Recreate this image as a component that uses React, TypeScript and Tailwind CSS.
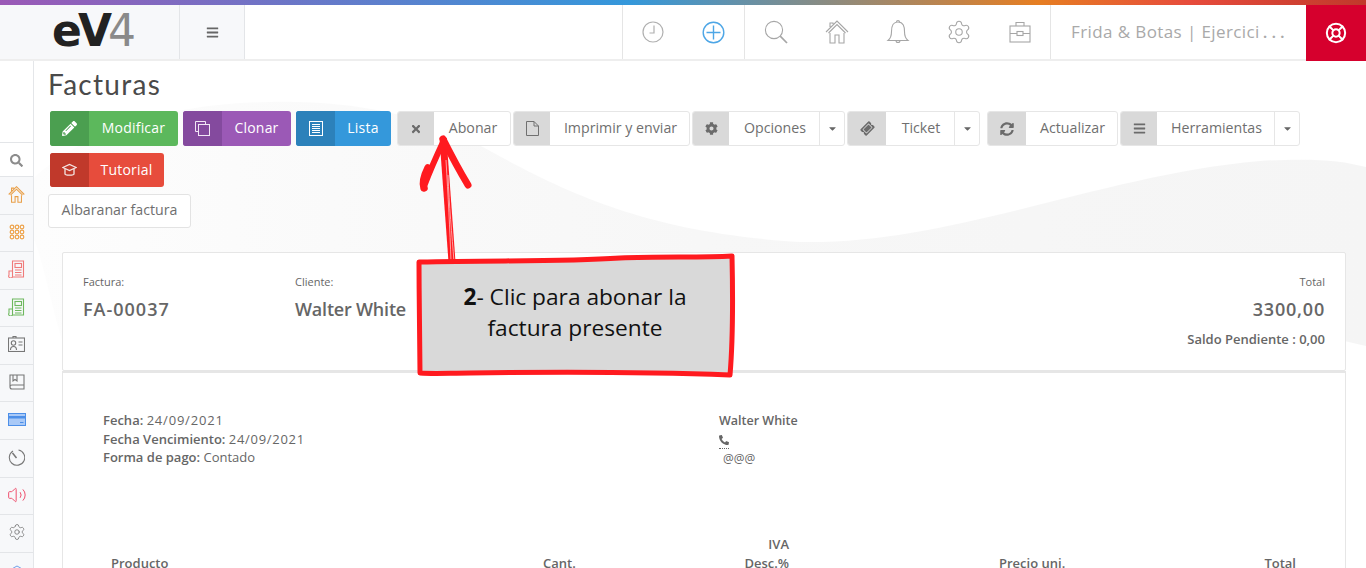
import React from "react";
import { Settings, LifeBuoy, Volume2 } from "lucide-react";
import { FaPencilAlt, FaTimes, FaCog, FaTicketAlt, FaSyncAlt, FaBars, FaCaretDown, FaSearch, FaPhoneAlt } from "react-icons/fa";

type BtnProps = { icon: React.ReactNode; label: string; w: string; dark: string; light: string };

function ColorBtn({ icon, label, w, dark, light }: BtnProps) {
  return (
    <div className={`flex overflow-hidden rounded-[3px] text-[14px] font-medium tracking-[0.2px] text-white ${w} ${light}`}>
      <span className={`flex w-[39px] shrink-0 items-center justify-center ${dark}`}>{icon}</span>
      <span className="flex flex-1 items-center justify-center pb-[2px]">{label}</span>
    </div>
  );
}

function GreyBtn({ icon, label, w, iw, caret }: { icon: React.ReactNode; label: string; w: string; iw: string; caret?: boolean }) {
  return (
    <div className={`flex h-[35px] overflow-hidden rounded-[3px] border border-[#e6e6e6] bg-white text-[14.2px] text-[#6f6f6f] ${w}`}>
      <span className={`flex shrink-0 items-center justify-center bg-[#d9d9d9] text-[#6b6b6b] ${iw}`}>{icon}</span>
      <span className="flex flex-1 items-center justify-center pb-[2px] pl-[2px]">{label}</span>
      {caret && (
        <span className="flex w-[25px] shrink-0 items-center justify-center border-l border-[#e6e6e6] text-[#666]">
          <FaCaretDown size={11} />
        </span>
      )}
    </div>
  );
}

function HeaderIcon({ children }: { children: React.ReactNode }) {
  return <div className="flex flex-1 items-center justify-center">{children}</div>;
}

const hs = { fill: "none", stroke: "#a6a6a6", strokeWidth: 1.1 };

function Clock() {
  return (
    <svg width="22" height="22" viewBox="0 0 22 22" fill="none" stroke="#b0b0b0" strokeWidth="1.2">
      <circle cx="11" cy="11" r="10" />
      <path d="M12 4.5V12H7.5" />
    </svg>
  );
}

function PlusCircle() {
  return (
    <svg width="23" height="23" viewBox="0 0 23 23" fill="none" stroke="#4da6e6" strokeWidth="1.4">
      <circle cx="11.5" cy="11.5" r="10.3" />
      <path d="M11.5 4.5V18.5M4.5 11.5H18.5" />
    </svg>
  );
}

function HSearch() {
  return (
    <svg width="24" height="24" viewBox="0 0 24 24" {...hs}>
      <circle cx="10" cy="10" r="8.6" />
      <path d="M16.2 16.2 23 23" strokeWidth="1.7" />
    </svg>
  );
}

function HouseIcon({ size, color, sw }: { size: number; color: string; sw: number }) {
  return (
    <svg width={size} height={size} viewBox="0 0 24 24" fill="none" stroke={color} strokeWidth={sw}>
      <path d="M1 12 12 1l11 11M3.500 13 12 4.500l8.500 8.500M5 7V3h3v1" />
      <path d="M5 13v10h5v-8h4v8h5V13" />
    </svg>
  );
}

function HBell() {
  return (
    <svg width="24" height="26" viewBox="0 0 24 26" {...hs}>
      <path d="M10.500 3a1.500 1.500 0 0 1 3 0" />
      <path d="M12 3C6.500 3 5.500 8 5.500 12.500 5.500 17 4.500 19.500 2 21.500H22C19.500 19.500 18.500 17 18.500 12.500 18.500 8 17.500 3 12 3Z" />
      <path d="M10 21.500a2 2 0 0 0 4 0" />
    </svg>
  );
}

function HCase() {
  return (
    <svg width="22" height="22" viewBox="0 0 22 22" {...hs}>
      <rect x="1" y="5" width="20" height="16" />
      <path d="M7 5V1.500H15V5M1 12.500H8M14 12.500H21" />
      <rect x="8" y="10.500" width="6" height="4" />
    </svg>
  );
}

function Dots() {
  const xs = [1, 2, 3];
  const ys = [1, 2, 3];
  return (
    <svg width="16" height="16" viewBox="0 0 16 16" fill="none" stroke="#eda24a" strokeWidth="1.2">
      {ys.map((y) => xs.map((x) => <circle key={`${x}-${y}`} cx={x * 5 - 2} cy={y * 5 - 2} r="1.8" />))}
    </svg>
  );
}

function Paper({ c }: { c: string }) {
  return (
    <svg width="17" height="18" viewBox="0 0 17 18" fill="none" stroke={c} strokeWidth="1.1">
      <path d="M4.500 17H15.500V1H4.500V11H1V15a2 2 0 0 0 3.500 2V11" />
      <rect x="7" y="3.500" width="6.500" height="4" />
      <path d="M7 10H13.500M7 12.500H13.500M7 15H13.500" />
    </svg>
  );
}

function Badge() {
  return (
    <svg width="17" height="16" viewBox="0 0 17 16" fill="none" stroke="#777" strokeWidth="1.1">
      <rect x="0.500" y="2" width="16" height="13.500" />
      <path d="M5 2V0.500H8V2" />
      <circle cx="5.500" cy="7" r="2.200" />
      <path d="M2.500 14c0-3 1-3.500 3-3.500s3 .5 3 3.500M10.500 6H14.500M10.500 9H14.500" />
    </svg>
  );
}

function Book() {
  return (
    <svg width="16" height="16" viewBox="0 0 16 16" fill="none" stroke="#777" strokeWidth="1.1">
      <path d="M1 13V1H15V15H3a2 2 0 0 1 0-4H15" />
      <path d="M4 1V7L6 5.500 8 7V1" />
    </svg>
  );
}

function Card() {
  return (
    <svg width="18" height="13" viewBox="0 0 18 13">
      <rect x="0.500" y="0.500" width="17" height="12" fill="#a9c9f7" stroke="#4d8fe8" />
      <rect x="1" y="3" width="16" height="2.500" fill="#4d8fe8" />
      <path d="M12 9.500H15.500" stroke="#4d8fe8" strokeWidth="1" />
    </svg>
  );
}

function Gauge() {
  return (
    <svg width="17" height="17" viewBox="0 0 17 17" fill="none" stroke="#777" strokeWidth="1.1">
      <path d="M5 2A7.700 7.700 0 1 0 10.500 1" />
      <path d="M4.500 4 8.500 9" strokeWidth="1.500" />
    </svg>
  );
}

function Hex() {
  return (
    <svg width="18" height="18" viewBox="0 0 18 18" fill="none" stroke="#6f9fe8" strokeWidth="1">
      <path d="M1 5.500 9 1l8 4.500v8L9 18l-8-4.500z" />
    </svg>
  );
}

function CloneIcon() {
  return (
    <svg width="15" height="15" viewBox="0 0 15 15" fill="none" stroke="#f1e6f5" strokeWidth="1">
      <path d="M3.500 10.500H0.500V0.500H10.500V3.500" />
      <rect x="3.500" y="3.500" width="11" height="11" />
    </svg>
  );
}

function ListIcon() {
  return (
    <svg width="14" height="15" viewBox="0 0 14 15" fill="none" stroke="#fff" strokeWidth="1">
      <rect x="0.500" y="0.500" width="13" height="14" />
      <path d="M3 3.500H11M3 5.500H11M3 7.500H11M3 9.500H11M3 11.500H11" />
    </svg>
  );
}

function CapIcon() {
  return (
    <svg width="15" height="14" viewBox="0 0 15 14" fill="none" stroke="#f5e6e4" strokeWidth="1.300">
      <path d="M0.800 4.500 7.500 1.500 14.200 4.500 7.500 7.500Z" />
      <path d="M3 6V11C3 12.500 12 12.500 12 11V6" />
    </svg>
  );
}

function FileIcon() {
  return (
    <svg width="13" height="15" viewBox="0 0 13 15" fill="none" stroke="#707070" strokeWidth="1">
      <path d="M0.500 0.500H8L12.500 5V14.500H0.500ZM8 0.500V5H12.500" />
    </svg>
  );
}

const sideRows: { icon: React.ReactNode; h: string; bg?: string; pad?: string }[] = [
  { icon: <FaSearch size={13} className="text-[#8c8c8c]" />, h: "h-[34px]", bg: "bg-white", pad: "pt-[2px]" },
  { icon: <HouseIcon size={17} color="#e9a04a" sw={1.5} />, h: "h-[38px]" },
  { icon: <Dots />, h: "h-[37px]" },
  { icon: <Paper c="#f07a7a" />, h: "h-[38px]" },
  { icon: <Paper c="#6fb85f" />, h: "h-[37px]" },
  { icon: <Badge />, h: "h-[38px]" },
  { icon: <Book />, h: "h-[37px]" },
  { icon: <Card />, h: "h-[38px]" },
  { icon: <Gauge />, h: "h-[38px]" },
  { icon: <Volume2 size={20} strokeWidth={1.2} className="text-[#f0506e]" />, h: "h-[37px]" },
  { icon: <Settings size={18} strokeWidth={1.1} className="text-[#777]" />, h: "h-[38px]" },
  { icon: <Hex />, h: "h-[40px]", pad: "pt-[2px]" },
];

export default function App() {
  return (
    <div className="relative flex h-[568px] w-[1366px] flex-col overflow-hidden bg-white font-['Open_Sans',sans-serif]">
      <div className="h-[5px] shrink-0 bg-[linear-gradient(to_right,#9b59b6_0%,#3498db_46%,#e67e22_76%,#e74c3c_87%,#c0392b_100%)]" />

      <header className="flex h-[56px] shrink-0 border-b-2 border-[#eeeeee] bg-white">
        <div className="flex w-[179px] items-center justify-center bg-[#f7f8fa] pb-[2px] pl-[5px]">
          <span className="font-['DejaVu_Sans',sans-serif] text-[44px] leading-none font-bold tracking-[-4px] text-[#222]">
            eV<span className="font-normal text-[#8a8a8a]">4</span>
          </span>
        </div>
        <div className="flex w-[66px] items-center justify-center border-x border-[#e3e5e8] bg-[#f7f8fa] text-[#666]">
          <FaBars size={13} />
        </div>
        <div className="w-[377px]" />
        <div className="flex w-[122px] border-l border-[#e5e5e5]">
          <HeaderIcon><Clock /></HeaderIcon>
          <HeaderIcon><PlusCircle /></HeaderIcon>
        </div>
        <div className="flex w-[306px] border-l border-[#e5e5e5]">
          <HeaderIcon><HSearch /></HeaderIcon>
          <HeaderIcon><HouseIcon size={24} color="#a6a6a6" sw={1.1} /></HeaderIcon>
          <HeaderIcon><HBell /></HeaderIcon>
          <HeaderIcon><Settings size={26} strokeWidth={1} className="text-[#a6a6a6]" /></HeaderIcon>
          <HeaderIcon><HCase /></HeaderIcon>
        </div>
        <div className="flex flex-1 items-center border-l border-[#e5e5e5] pl-[20px] text-[17px] tracking-[0.4px] text-[#a9a9a9]">
          Frida &amp; Botas | Ejercici<span className="pl-[3px] font-semibold tracking-[4px]">...</span>
        </div>
        <div className="-mb-[2px] flex w-[60px] items-center justify-center bg-[#d6002d] text-white">
          <LifeBuoy size={22} strokeWidth={2.2} />
        </div>
      </header>

      <div className="flex min-h-0 flex-1">
        <aside className="flex w-[34px] shrink-0 flex-col border-r border-[#e4e6e9]">
          <div className="h-[81px] shrink-0 bg-white" />
          {sideRows.map((r, i) => (
            <div key={i} className={`flex shrink-0 items-center justify-center border-t border-[#e3e5e8] ${r.h} ${r.bg ?? "bg-[#f7f8fa]"} ${r.pad ?? "pb-[3px]"}`}>
              {r.icon}
            </div>
          ))}
        </aside>

        <main className="relative min-w-0 flex-1">
          <svg className="absolute top-0 left-0" width="1332" height="507" viewBox="34 61 1332 507">
            <defs>
              <linearGradient id="wave" x1="0" y1="0" x2="1" y2="0">
                <stop offset="0" stopColor="#fdfdfd" />
                <stop offset="0.3" stopColor="#f9f9f9" />
                <stop offset="0.5" stopColor="#f7f7f7" />
                <stop offset="1" stopColor="#f5f5f5" />
              </linearGradient>
            </defs>
            <path
              fill="url(#wave)"
              d="M34 178C70 145 140 104 270 102C350 100 420 115 470 140C560 190 640 232 800 242C950 245 1100 175 1260 161C1310 158 1340 160 1366 167L1366 346L1340 340L62 340C50 300 40 250 34 240Z"
            />
          </svg>

          <div className="relative">
            <h1 className="ml-[14px] h-[50px] pt-[5px] font-['Lato',sans-serif] text-[28px] leading-[37px] tracking-[1.3px] text-[#4a4a4a]">Facturas</h1>

            <div className="flex flex-wrap pl-[16px]">
              <ColorBtn icon={<FaPencilAlt size={15} />} label="Modificar" w="h-[35px] w-[128px]" dark="bg-[#4b9f50]" light="bg-[#5cb85c]" />
              <div className="w-[5px]" />
              <ColorBtn icon={<CloneIcon />} label="Clonar" w="h-[35px] w-[108px]" dark="bg-[#844a9e]" light="bg-[#9b59b6]" />
              <div className="w-[5px]" />
              <ColorBtn icon={<ListIcon />} label="Lista" w="h-[35px] w-[95px]" dark="bg-[#2c81ba]" light="bg-[#3498db]" />
              <div className="w-[6px]" />
              <GreyBtn icon={<FaTimes size={12} />} label="Abonar" w="w-[114px]" iw="w-[36px]" />
              <div className="w-[2px]" />
              <GreyBtn icon={<FileIcon />} label="Imprimir y enviar" w="w-[177px]" iw="w-[36px]" />
              <div className="w-[2px]" />
              <GreyBtn icon={<FaCog size={13} />} label="Opciones" w="w-[153px]" iw="w-[36px]" caret />
              <div className="w-[2px]" />
              <GreyBtn icon={<FaTicketAlt size={13} className="-rotate-45" />} label="Ticket" w="w-[133px]" iw="w-[38px]" caret />
              <div className="w-[7px]" />
              <GreyBtn icon={<FaSyncAlt size={14} />} label="Actualizar" w="w-[131px]" iw="w-[38px]" />
              <div className="w-[2px]" />
              <GreyBtn icon={<FaBars size={13} />} label="Herramientas" w="w-[180px]" iw="w-[36px]" caret />
              <div className="mt-[7px] w-full">
                <ColorBtn icon={<CapIcon />} label="Tutorial" w="h-[34px] w-[114px]" dark="bg-[#c0392b]" light="bg-[#e74c3c]" />
              </div>
            </div>

            <div className="mt-[7px] ml-[14px] flex h-[34px] w-[143px] items-center justify-center rounded-[3px] border border-[#e3e3e3] bg-white pb-[3px] text-[14.2px] text-[#6f6f6f]">
              Albaranar factura
            </div>

            <section className="mt-[24px] ml-[28px] flex h-[119px] w-[1284px] rounded-[2px] border border-[#e6e6e6] bg-white px-[20px] pt-[21px] text-[#666]">
              <div className="w-[212px]">
                <p className="text-[11px] leading-[15px]">Factura:</p>
                <p className="mt-[8px] text-[18px] leading-[24px] font-semibold tracking-[1px]">FA-00037</p>
              </div>
              <div>
                <p className="text-[11px] leading-[15px]">Cliente:</p>
                <p className="mt-[8px] text-[18px] leading-[24px] font-semibold tracking-[-0.2px]">Walter White</p>
              </div>
              <div className="ml-auto text-right">
                <p className="text-[11px] leading-[15px]">Total</p>
                <p className="mt-[8px] text-[18px] leading-[24px] font-semibold tracking-[0.8px]">3300,00</p>
                <p className="mt-[9px] text-[13px] leading-[18px] font-semibold">Saldo Pendiente : 0,00</p>
              </div>
            </section>

            <section className="ml-[28px] h-[200px] w-[1284px] border-x border-t-2 border-[#e6e6e6] bg-white px-[40px] pt-[38px] text-[13px] leading-[18.7px] text-[#666]">
              <div className="flex">
                <div className="w-[616px]">
                  <p><b className="font-semibold">Fecha:</b> <span className="tracking-[0.8px]">24/09/2021</span></p>
                  <p><b className="font-semibold">Fecha Vencimiento:</b> <span className="tracking-[0.7px]">24/09/2021</span></p>
                  <p><b className="font-semibold">Forma de pago:</b> Contado</p>
                </div>
                <div className="pt-[1px] text-[12.5px]">
                  <p className="font-semibold">Walter White</p>
                  <div className="flex h-[19px] flex-col pt-[4px]">
                    <FaPhoneAlt size={10} />
                    <span className="mt-[3px] w-[10px] border-t border-dotted border-[#666]" />
                  </div>
                  <p className="pl-[4px] text-[12px]">@@@</p>
                </div>
              </div>
              <div className="mt-[67px] grid grid-cols-[432px_190px_56px_1fr_auto] items-end pr-[9px] pl-[8px] font-semibold">
                <span>Producto</span>
                <span>Cant.</span>
                <span className="text-right">IVA<br />Desc.%</span>
                <span className="pl-[210px]">Precio uni.</span>
                <span className="text-right">Total</span>
              </div>
            </section>
          </div>
        </main>
      </div>

      {/* Annotation overlay: arrow */}
      <svg className="absolute top-[130px] left-[410px]" width="70" height="135" viewBox="410 130 70 135" fill="none">
        <path d="M443 138C446 180 449 220 452 262" stroke="#ff1a1f" strokeWidth="7" />
        <path d="M446 160C448 195 450 230 451 262M448 175C449 205 452 235 454 262" stroke="#ffb0b0" strokeWidth="0.9" />
        <path d="M444 140C437 155 431 168 425 184" stroke="#ff1a1f" strokeWidth="6" strokeLinecap="round" />
        <path d="M428 168C424 176 422 182 424 188" stroke="#ff1a1f" strokeWidth="7.500" strokeLinecap="round" />
        <path d="M443 139C451 155 459 170 468 185" stroke="#ff1a1f" strokeWidth="7" strokeLinecap="round" />
      </svg>

      {/* Annotation overlay: callout */}
      <div className="absolute top-[253px] left-[414px] flex h-[126px] w-[322px] items-center justify-center">
        <svg className="absolute inset-0" width="322" height="126" viewBox="414 253 322 126" fill="none">
          <path
            d="M419 262C500 260 560 262 620 258C660 256 700 258 732 256C733 300 733 340 730 375C650 372 540 372 470 373C450 373 435 374 420 373C420 340 419 300 419 262Z"
            fill="#d9d9d9"
            stroke="#ff1a1f"
            strokeWidth="5"
            strokeLinejoin="round"
          />
        </svg>
        <p className="relative w-[280px] pb-[8px] text-center text-[22.7px] leading-[31px] text-[#111]">
          <b>2</b>- Clic para abonar la factura presente
        </p>
      </div>
    </div>
  );
}
